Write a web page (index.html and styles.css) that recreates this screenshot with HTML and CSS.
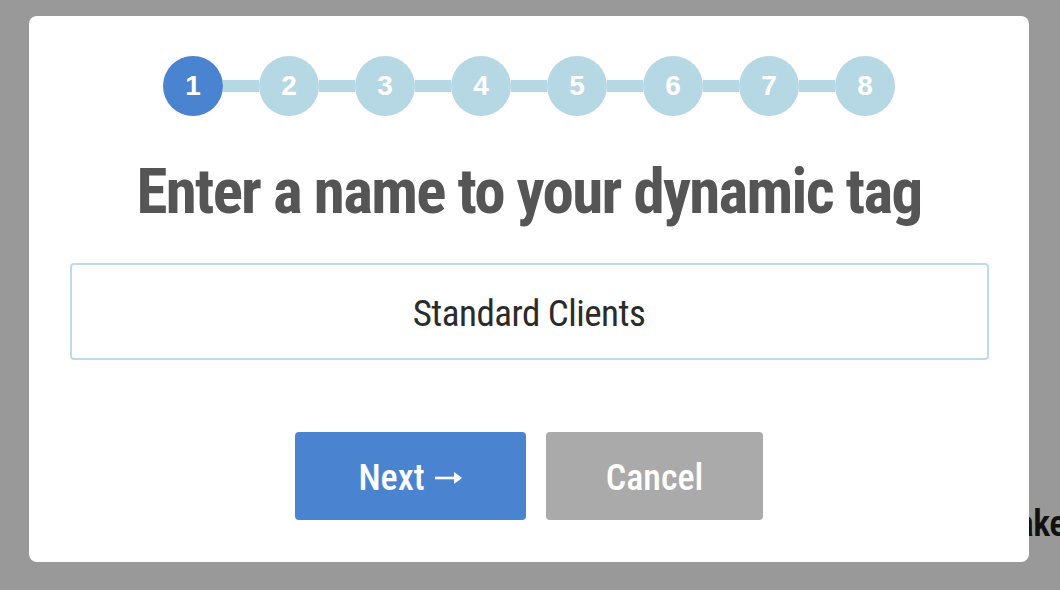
FILE: index.html
```html
<!DOCTYPE html>
<html>
<head>
<meta charset="utf-8">
<link rel="stylesheet" href="styles.css">
</head>
<body>
<div class="page-text">Make</div>
<div class="overlay">
  <div class="modal">
    <div class="steps">
      <div class="step active">1</div>
      <div class="bar"></div>
      <div class="step">2</div>
      <div class="bar"></div>
      <div class="step">3</div>
      <div class="bar"></div>
      <div class="step">4</div>
      <div class="bar"></div>
      <div class="step">5</div>
      <div class="bar"></div>
      <div class="step">6</div>
      <div class="bar"></div>
      <div class="step">7</div>
      <div class="bar"></div>
      <div class="step">8</div>
    </div>
    <h1 class="title">Enter a name to your dynamic tag</h1>
    <div class="field">Standard Clients</div>
    <div class="actions">
      <div class="btn btn-next">Next<svg class="arrow" width="28" height="14" viewBox="0 0 28 14"><path d="M0 7H25" stroke="#fff" stroke-width="2.6" fill="none"/><path d="M19 1L27 7L19 13Z" fill="#fff"/></svg></div>
      <div class="btn btn-cancel">Cancel</div>
    </div>
  </div>
</div>
</body>
</html>
```
FILE: styles.css
```css
html, body {
  margin: 0;
  padding: 0;
  background: #999999;
  width: 1060px;
  height: 590px;
  overflow: hidden;
}
.page-text {
  position: absolute;
  right: -6px;
  top: 501px;
  font-family: Roboto, "Liberation Sans", sans-serif;
  font-stretch: 75%;
  font-weight: 600;
  font-size: 36px;
  line-height: 46px;
  color: #111;
  letter-spacing: -0.5px;
}
.overlay {
  position: relative;
  padding: 16px 0 0 29px;
}
.modal {
  width: 1000px;
  height: 546px;
  background: #fff;
  border-radius: 8px;
  box-sizing: border-box;
  padding-top: 40px;
  display: flex;
  flex-direction: column;
  align-items: center;
  font-family: "Roboto Condensed", Roboto, sans-serif;
  font-stretch: 75%;
}
.steps {
  display: flex;
  align-items: center;
}
.step {
  width: 60px;
  height: 60px;
  border-radius: 50%;
  background: #b6d8e5;
  color: #fff;
  font-family: "Liberation Sans", Arial, sans-serif;
  font-weight: bold;
  font-size: 28px;
  display: flex;
  align-items: center;
  justify-content: center;
}
.step.active {
  background: #4a84d0;
}
.bar {
  width: 36px;
  height: 12px;
  background: #b6d8e5;
}
.title {
  margin: 38px 0 0 0;
  font-size: 63px;
  line-height: 76px;
  font-weight: 700;
  color: #555555;
  letter-spacing: -1.7px;
  font-stretch: 75%;
}
.field {
  margin-top: 33px;
  width: 919px;
  height: 97px;
  box-sizing: border-box;
  border: 2px solid #bcdcee;
  border-radius: 4px;
  padding-top: 3px;
  display: flex;
  align-items: center;
  justify-content: center;
  font-size: 37px;
  color: #2b2b2b;
  letter-spacing: -0.5px;
  font-stretch: 75%;
}
.actions {
  margin-top: 72px;
  display: flex;
  gap: 20px;
}
.btn {
  height: 88px;
  box-sizing: border-box;
  padding-top: 4px;
  border-radius: 4px;
  color: #fff;
  font-size: 36px;
  font-weight: 500;
  display: flex;
  align-items: center;
  justify-content: center;
  font-stretch: 75%;
}
.arrow {
  margin-left: 10px;
  margin-top: 0;
}
.btn-next {
  width: 231px;
  background: #4a84d0;
}
.btn-cancel {
  width: 217px;
  background: #aaaaaa;
}
```
